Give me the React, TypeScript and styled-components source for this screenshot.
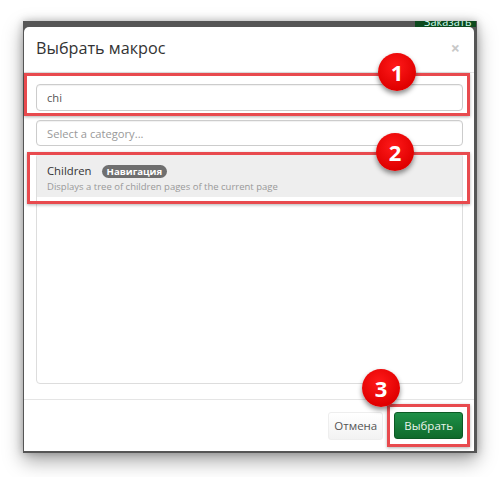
import React from "react";
import styled, { createGlobalStyle } from "styled-components";

const Global = createGlobalStyle`
  html, body { margin: 0; padding: 0; background: #fff; }
  body { font-family: "Open Sans", "Noto Sans", Arial, sans-serif; }
  * { box-sizing: border-box; }
`;

const Page = styled.div`
  position: relative;
  width: 500px;
  height: 477px;
  padding: 21px 0 0 23px;
  overflow: hidden;
`;

const Frame = styled.div`
  position: relative;
  width: 454px;
  height: 432px;
  background: #555;
  padding: 6px 3px 2px 1px;
  box-shadow: 0 8px 18px rgba(0, 0, 0, 0.35), 0 0 8px rgba(0, 0, 0, 0.25);
`;

const BehindButton = styled.div`
  position: absolute;
  top: 0;
  right: 1px;
  width: 61px;
  height: 6px;
  background: #0d4a1e;
  overflow: hidden;
  color: #cfe;
  font-size: 11px;
  line-height: 1;
  padding-left: 9px;
  display: flex;
  align-items: flex-end;
`;

const Modal = styled.div`
  width: 100%;
  height: 100%;
  background: #fff;
  border-radius: 5px 5px 0 0;
  display: flex;
  flex-direction: column;
`;

const Header = styled.div`
  height: 46px;
  border-bottom: 1px solid #e5e5e5;
  display: flex;
  align-items: center;
  justify-content: space-between;
  padding: 0 14px 4px 12px;
`;

const Title = styled.h4`
  margin: 0;
  font-size: 16.2px;
  font-weight: 400;
  color: #333;
`;

const Close = styled.span`
  font-size: 16px;
  font-weight: 700;
  color: #c8c8c8;
  line-height: 1;
`;

const Body = styled.div`
  flex: 1;
  padding: 11px 11px 15px 12px;
  display: flex;
  flex-direction: column;
`;

const Input = styled.div<{ $placeholder?: boolean; $h: number }>`
  height: ${(p) => p.$h}px;
  border: 1px solid #ccc;
  border-radius: 4px;
  display: flex;
  align-items: center;
  padding: 0 10px;
  font-size: 11.2px;
  color: ${(p) => (p.$placeholder ? "#999" : "#555")};
  box-shadow: inset 0 1px 1px rgba(0, 0, 0, 0.06);
`;

const Gap = styled.div<{ $h: number }>`
  height: ${(p) => p.$h}px;
  flex-shrink: 0;
`;

const List = styled.div`
  flex: 1;
  border: 1px solid #ddd;
  border-radius: 4px;
  overflow: hidden;
`;

const Item = styled.div<{ $active?: boolean }>`
  background: ${(p) => (p.$active ? "#eee" : "#fff")};
  padding: 8px 10px 5px;
  height: 43px;
`;

const ItemTop = styled.div`
  display: flex;
  align-items: center;
  gap: 10px;
  font-size: 11.3px;
  color: #333;
  line-height: 18px;
`;

const Pill = styled.span`
  background: #6f6f6f;
  color: #fff;
  font-size: 9.6px;
  font-weight: 700;
  border-radius: 8px;
  padding: 0 5px;
  line-height: 13px;
`;

const Desc = styled.div`
  font-size: 9.5px;
  color: #999;
  line-height: 14px;
`;

const Footer = styled.div`
  height: 52px;
  border-top: 1px solid #e5e5e5;
  display: flex;
  align-items: center;
  justify-content: flex-end;
  gap: 11px;
  padding: 0 11px 0 0;
`;

const Button = styled.div<{ $primary?: boolean }>`
  height: ${(p) => (p.$primary ? 27 : 28)}px;
  padding: 0 ${(p) => (p.$primary ? 9 : 5)}px;
  display: flex;
  align-items: center;
  font-size: 11.5px;
  border-radius: 3px;
  color: ${(p) => (p.$primary ? "#eaf5ec" : "#555")};
  background: ${(p) =>
    p.$primary ? "linear-gradient(#1f9048, #0f6a2c)" : "linear-gradient(#fff, #f2f2f2)"};
  border: 1px solid ${(p) => (p.$primary ? "#0c5a25" : "#eee")};
`;

const RedBox = styled.div<{ $x: number; $y: number; $w: number; $h: number }>`
  position: absolute;
  left: ${(p) => p.$x}px;
  top: ${(p) => p.$y}px;
  width: ${(p) => p.$w}px;
  height: ${(p) => p.$h}px;
  border: 3px solid #e84a4e;
  box-shadow: 0 1px 3px rgba(0, 0, 0, 0.3);
  pointer-events: none;
`;

const Marker = styled.div<{ $x: number; $y: number }>`
  position: absolute;
  left: ${(p) => p.$x - 19}px;
  top: ${(p) => p.$y - 19}px;
  width: 38px;
  height: 38px;
  border-radius: 50%;
  background: radial-gradient(circle at 45% 35%, #ff1a1a, #e00000 70%);
  box-shadow: 0 3px 5px rgba(0, 0, 0, 0.45);
  color: #fff;
  font-weight: 700;
  font-size: 22px;
  display: flex;
  align-items: center;
  justify-content: center;
`;

export default function App() {
  return (
    <Page>
      <Global />
      <Frame>
        <BehindButton>Заказать</BehindButton>
        <Modal>
          <Header>
            <Title>Выбрать макрос</Title>
            <Close>×</Close>
          </Header>
          <Body>
            <Input $h={27}>chi</Input>
            <Gap $h={9} />
            <Input $h={26} $placeholder>
              Select a category...
            </Input>
            <Gap $h={7} />
            <List>
              <Item $active>
                <ItemTop>
                  Children <Pill>Навигация</Pill>
                </ItemTop>
                <Desc>Displays a tree of children pages of the current page</Desc>
              </Item>
            </List>
          </Body>
          <Footer>
            <Button>Отмена</Button>
            <Button $primary>Выбрать</Button>
          </Footer>
        </Modal>
      </Frame>
      <RedBox $x={24} $y={73} $w={446} $h={43} />
      <RedBox $x={27} $y={152} $w={443} $h={52} />
      <RedBox $x={387} $y={404} $w={83} $h={43} />
      <Marker $x={397} $y={72}>1</Marker>
      <Marker $x={395} $y={152}>2</Marker>
      <Marker $x={381} $y={388}>3</Marker>
    </Page>
  );
}
